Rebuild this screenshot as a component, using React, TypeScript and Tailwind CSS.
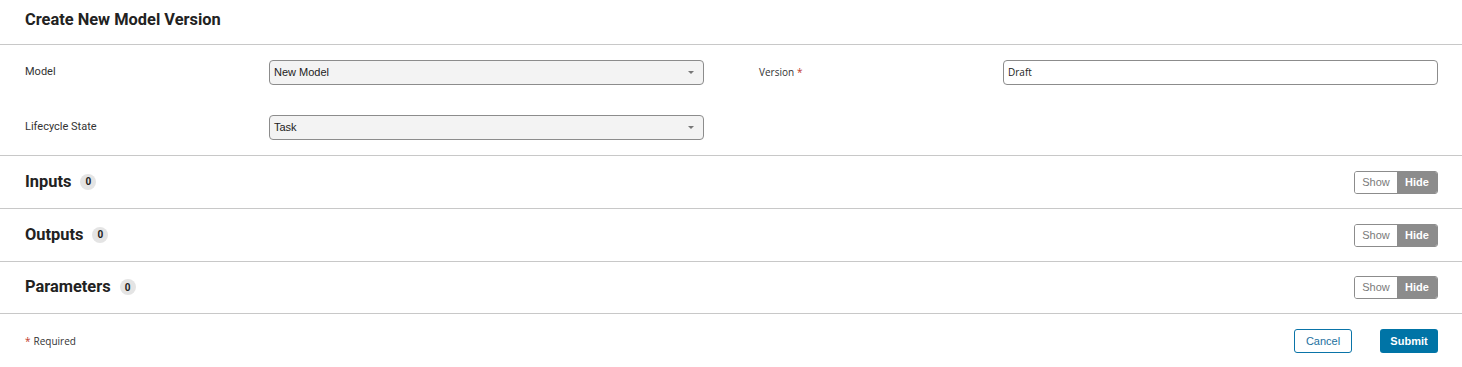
import React from "react";

const roboto = { fontFamily: "Roboto, 'Liberation Sans', sans-serif" };

function Chevron() {
  return (
    <svg width="6" height="3" viewBox="0 0 6 3" className="shrink-0">
      <path d="M0 0 L6 0 L3 3 Z" fill="#777" />
    </svg>
  );
}

function SelectBox({ value }: { value: string }) {
  return (
    <div className="h-[25px] w-full rounded-[4px] border border-[#8c8c8c] bg-[#f3f3f3] flex items-center justify-between pl-[4px] pr-[9px] font-['Liberation_Sans',Arial,sans-serif] text-[11px] text-[#222]">
      <span>{value}</span>
      <Chevron />
    </div>
  );
}

function Toggle() {
  return (
    <div className="flex h-[23px] w-[84px] rounded-[3px] border border-[#8c8c8c] overflow-hidden font-['Liberation_Sans',Arial,sans-serif] text-[11px]">
      <div className="w-[42px] flex items-center justify-center text-[#7a7a7a] bg-white">Show</div>
      <div className="flex-1 flex items-center justify-center bg-[#8c8c8c] text-white font-bold">Hide</div>
    </div>
  );
}

function Section({ title, h }: { title: string; h: string }) {
  return (
    <div className={`${h} border-b border-[#c8c8c8] flex items-center justify-between pl-[25px] pr-[24px]`}>
      <div className="flex items-center gap-[9px]">
        <span className="font-['Roboto'] font-bold text-[16.4px] text-[#222]">{title}</span>
        <span className="w-[16px] h-[16px] rounded-full bg-[#e4e4e4] flex items-center justify-center font-['Roboto'] font-bold text-[10px] text-[#222]">
          0
        </span>
      </div>
      <Toggle />
    </div>
  );
}

export default function App() {
  return (
    <div className="w-[1462px] h-[367px] bg-white" style={roboto}>
      <div className="h-[45px] border-b border-[#c8c8c8] flex items-center pl-[25px] pb-[4px]">
        <h1 className="font-['Roboto'] font-bold text-[16.4px] text-[#222]">Create New Model Version</h1>
      </div>
      <div className="border-b border-[#c8c8c8] pl-[25px] pr-[24px] pt-[15px] pb-[15px] flex gap-[55px]">
        <div className="flex-1 grid grid-cols-[244px_1fr] gap-y-[30px] items-center">
          <span className="font-['Roboto'] text-[11px] text-[#333]">Model</span>
          <SelectBox value="New Model" />
          <span className="font-['Roboto'] text-[11px] text-[#333]">Lifecycle State</span>
          <SelectBox value="Task" />
        </div>
        <div className="flex-1 grid grid-cols-[244px_1fr] gap-y-[30px] items-start">
          <div className="h-[25px] flex items-center font-['Open_Sans'] text-[10px] text-[#333]">
            Version<span className="text-[#c0392b] ml-[3px]">*</span>
          </div>
          <div className="h-[25px] w-full rounded-[4px] border border-[#8c8c8c] bg-white flex items-center pl-[4px] font-['Open_Sans'] text-[10px] text-[#222]">
            Draft
          </div>
        </div>
      </div>
      <Section title="Inputs" h="h-[53px]" />
      <Section title="Outputs" h="h-[53px]" />
      <Section title="Parameters" h="h-[52px]" />
      <div className="h-[54px] flex items-center justify-between pl-[25px] pr-[24px]">
        <div className="font-['Open_Sans'] text-[10px] text-[#333]">
          <span className="text-[#c0392b] mr-[3px]">*</span>Required
        </div>
        <div className="flex items-center gap-[28px] font-['Liberation_Sans',Arial,sans-serif] text-[11px]">
          <button className="w-[58px] h-[24px] rounded-[3px] border border-[#0a74a8] bg-white text-[#1c6f9e]">Cancel</button>
          <button className="w-[58px] h-[24px] rounded-[3px] bg-[#0074a6] text-white font-bold">Submit</button>
        </div>
      </div>
    </div>
  );
}
